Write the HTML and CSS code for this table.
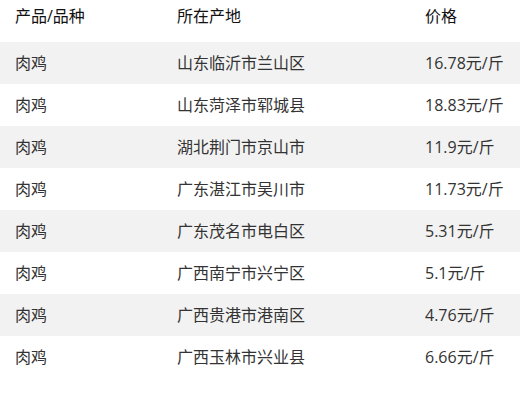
FILE: index.html
```html
<!DOCTYPE html>
<html lang="zh-CN">
<head>
<meta charset="utf-8">
<title>肉鸡价格</title>
<link rel="stylesheet" href="styles.css">
</head>
<body>
<div class="table">
  <div class="row head">
    <div class="cell">产品/品种</div>
    <div class="cell">所在产地</div>
    <div class="cell">价格</div>
  </div>
  <div class="row alt">
    <div class="cell">肉鸡</div>
    <div class="cell">山东临沂市兰山区</div>
    <div class="cell">16.78元/斤</div>
  </div>
  <div class="row">
    <div class="cell">肉鸡</div>
    <div class="cell">山东菏泽市郓城县</div>
    <div class="cell">18.83元/斤</div>
  </div>
  <div class="row alt">
    <div class="cell">肉鸡</div>
    <div class="cell">湖北荆门市京山市</div>
    <div class="cell">11.9元/斤</div>
  </div>
  <div class="row">
    <div class="cell">肉鸡</div>
    <div class="cell">广东湛江市吴川市</div>
    <div class="cell">11.73元/斤</div>
  </div>
  <div class="row alt">
    <div class="cell">肉鸡</div>
    <div class="cell">广东茂名市电白区</div>
    <div class="cell">5.31元/斤</div>
  </div>
  <div class="row">
    <div class="cell">肉鸡</div>
    <div class="cell">广西南宁市兴宁区</div>
    <div class="cell">5.1元/斤</div>
  </div>
  <div class="row alt">
    <div class="cell">肉鸡</div>
    <div class="cell">广西贵港市港南区</div>
    <div class="cell">4.76元/斤</div>
  </div>
  <div class="row">
    <div class="cell">肉鸡</div>
    <div class="cell">广西玉林市兴业县</div>
    <div class="cell">6.66元/斤</div>
  </div>
</div>
</body>
</html>
```
FILE: styles.css
```css
html, body {
  margin: 0;
  padding: 0;
  background: #ffffff;
}
body {
  font-family: "Open Sans", "Noto Sans CJK SC", sans-serif;
  font-size: 16px;
  color: #333333;
}
.table {
  display: flex;
  flex-direction: column;
  width: 520px;
}
.row {
  display: grid;
  grid-template-columns: 162px 248px 110px;
  height: 42px;
  align-items: center;
}
.row.alt {
  background: #f2f2f2;
}
.cell {
  padding-left: 15px;
  line-height: 22px;
  white-space: nowrap;
}
.row.head {
  align-items: start;
  color: #111111;
}
.row.head .cell {
  padding-top: 5px;
}
```
